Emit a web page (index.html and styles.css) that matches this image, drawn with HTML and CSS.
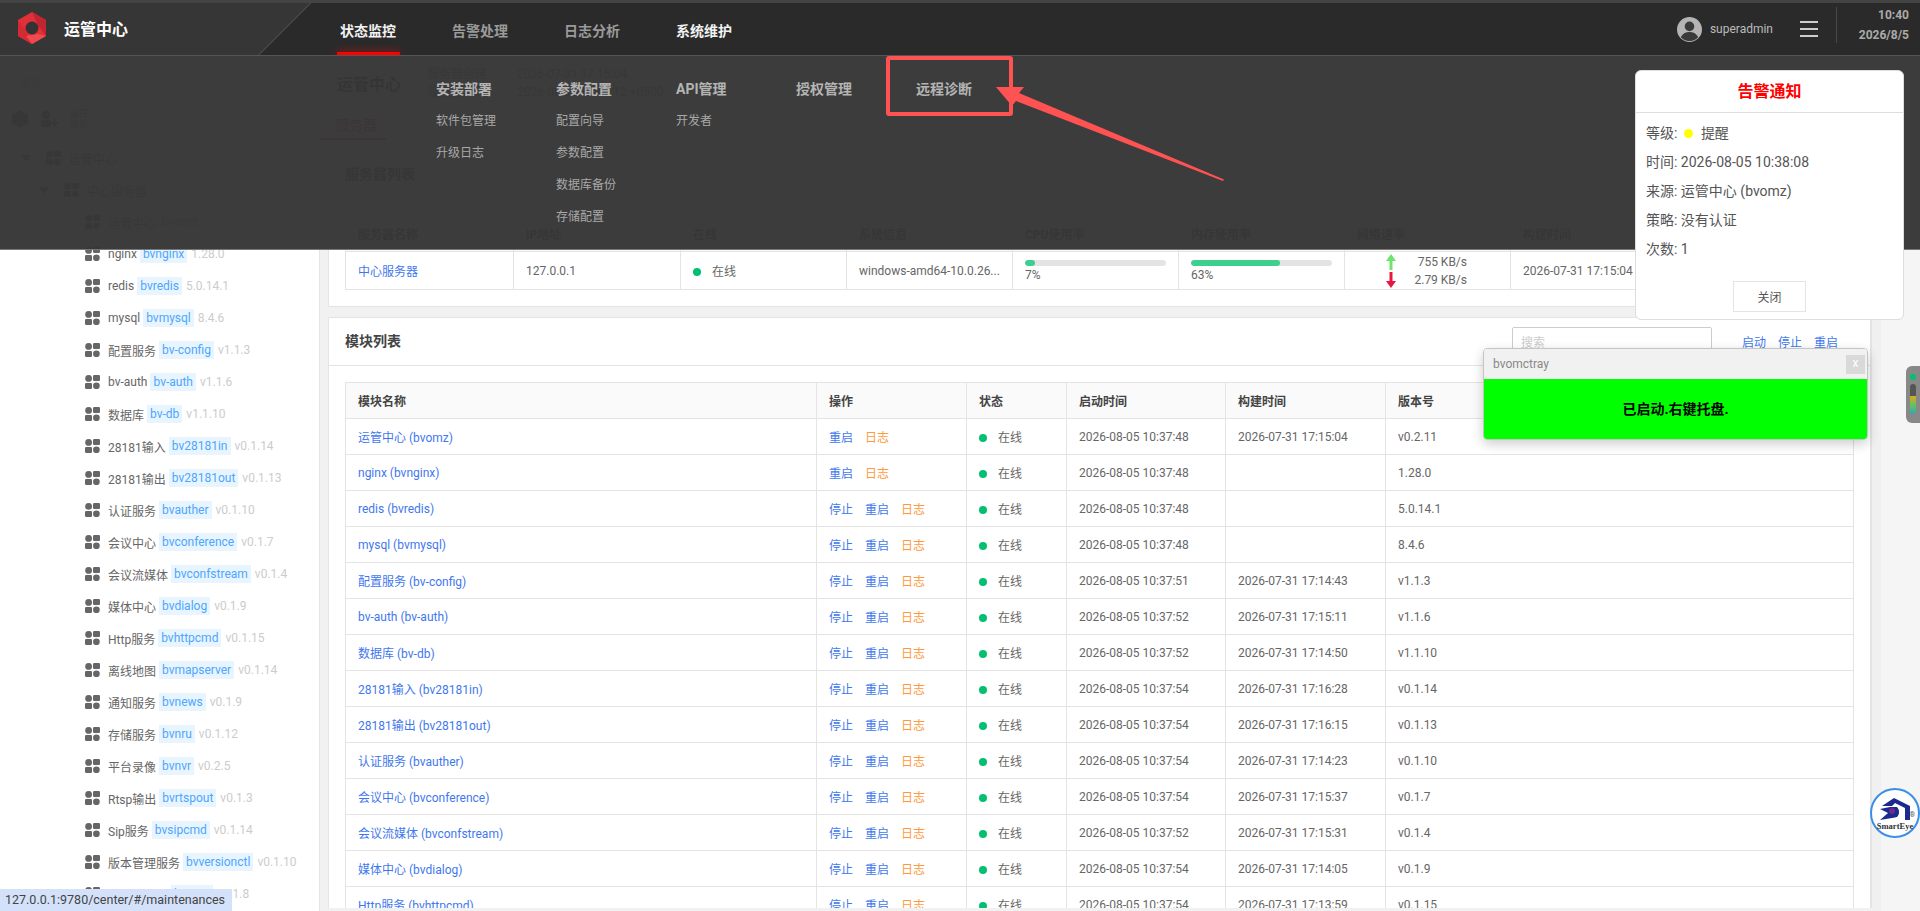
FILE: index.html
```html
<!DOCTYPE html>
<html lang="zh-CN">
<head>
    <meta charset="UTF-8">
    <title>运管中心</title>
    <link rel="stylesheet" href="styles.css">
</head>
<body>
    <svg width="0" height="0" class="defs">
        <defs>
            <symbol id="mod" viewBox="0 0 15 14">
                <circle cx="3.6" cy="3.4" r="3.4"/>
                <rect x="8" y="0" width="7" height="6" rx="1.2"/>
                <rect x="0" y="8" width="7" height="6" rx="1.2"/>
                <circle cx="11.4" cy="10.8" r="3.4"/>
            </symbol>
        </defs>
    </svg>

    <!-- 顶部导航 -->
    <header class="topbar">
        <div class="brand">
            <svg class="logo" viewBox="0 0 28 32">
                <polygon points="14,0 28,8 28,24 14,32 0,24 0,8" fill="#e2303a"/>
                <polygon points="14,0 28,8 28,24 20,13" fill="#c22430"/>
                <polygon points="0,8 8,19 14,32 0,24" fill="#d32a34"/>
                <polygon points="28,24 14,32 8,24 20,22" fill="#ef4a50"/>
                <circle cx="14" cy="16" r="6.500" fill="#333"/>
            </svg>
            <span class="brand-name">运管中心</span>
        </div>
        <div class="nav-edge">
            <div class="nav-area">
                <nav class="nav">
                    <a class="nav-item active">状态监控</a>
                    <a class="nav-item">告警处理</a>
                    <a class="nav-item">日志分析</a>
                    <a class="nav-item bright">系统维护</a>
                </nav>
                <div class="user">
                    <svg class="avatar" viewBox="0 0 24 24">
                        <circle cx="12" cy="12" r="12" fill="#b4b4b4"/>
                        <circle cx="12" cy="9" r="4.6" fill="#3a3a3a"/>
                        <path d="M3.6 19.5c1.6-3.6 4.6-5.2 8.4-5.2s6.800 1.600 8.400 5.200A11 11 0 0 1 12 23a11 11 0 0 1-8.400-3.500z" fill="#3a3a3a"/>
                    </svg>
                    <span class="user-name">superadmin</span>
                    <span class="burger"><i></i><i></i><i></i></span>
                    <div class="clock">
                        <b>10:40</b>
                        <b>2026/8/5</b>
                    </div>
                </div>
            </div>
        </div>
    </header>

    <div class="layout">
        <!-- 左侧模块树 -->
        <aside class="sidebar">
            <div class="side-search">搜索</div>
            <div class="side-tools">
                <svg width="16" height="18" viewBox="0 0 16 18"><polygon points="8,0 16,4.500 16,13.500 8,18 0,13.500 0,4.500" fill="#666"/></svg>
                <svg width="18" height="18" viewBox="0 0 18 18"><circle cx="6" cy="5" r="4" fill="#666"/><rect x="1" y="10" width="10" height="7" fill="#666"/><rect x="11" y="12" width="7" height="2" fill="#666"/><rect x="13.500" y="9.500" width="2" height="7" fill="#666"/></svg>
                <span class="tool-text">展开<br>收起</span>
            </div>
            <div class="tree-row level-0"><i class="caret"></i><svg class="tree-ico" viewBox="0 0 15 14"><use href="#mod"/></svg><span class="mod-name">运管中心</span></div>
            <div class="tree-row level-1"><i class="caret"></i><svg class="tree-ico" viewBox="0 0 15 14"><use href="#mod"/></svg><span class="mod-name">中心服务器</span></div>
            <div class="tree-row"><svg class="mod-ico"><use href="#mod"/></svg><span class="mod-name">运管中心</span><span class="tag">bvomz</span><span class="ver">v0.2.11</span></div>
            <div class="tree-row"><svg class="mod-ico"><use href="#mod"/></svg><span class="mod-name">nginx</span><span class="tag">bvnginx</span><span class="ver">1.28.0</span></div>
            <div class="tree-row"><svg class="mod-ico"><use href="#mod"/></svg><span class="mod-name">redis</span><span class="tag">bvredis</span><span class="ver">5.0.14.1</span></div>
            <div class="tree-row"><svg class="mod-ico"><use href="#mod"/></svg><span class="mod-name">mysql</span><span class="tag">bvmysql</span><span class="ver">8.4.6</span></div>
            <div class="tree-row"><svg class="mod-ico"><use href="#mod"/></svg><span class="mod-name">配置服务</span><span class="tag">bv-config</span><span class="ver">v1.1.3</span></div>
            <div class="tree-row"><svg class="mod-ico"><use href="#mod"/></svg><span class="mod-name">bv-auth</span><span class="tag">bv-auth</span><span class="ver">v1.1.6</span></div>
            <div class="tree-row"><svg class="mod-ico"><use href="#mod"/></svg><span class="mod-name">数据库</span><span class="tag">bv-db</span><span class="ver">v1.1.10</span></div>
            <div class="tree-row"><svg class="mod-ico"><use href="#mod"/></svg><span class="mod-name">28181输入</span><span class="tag">bv28181in</span><span class="ver">v0.1.14</span></div>
            <div class="tree-row"><svg class="mod-ico"><use href="#mod"/></svg><span class="mod-name">28181输出</span><span class="tag">bv28181out</span><span class="ver">v0.1.13</span></div>
            <div class="tree-row"><svg class="mod-ico"><use href="#mod"/></svg><span class="mod-name">认证服务</span><span class="tag">bvauther</span><span class="ver">v0.1.10</span></div>
            <div class="tree-row"><svg class="mod-ico"><use href="#mod"/></svg><span class="mod-name">会议中心</span><span class="tag">bvconference</span><span class="ver">v0.1.7</span></div>
            <div class="tree-row"><svg class="mod-ico"><use href="#mod"/></svg><span class="mod-name">会议流媒体</span><span class="tag">bvconfstream</span><span class="ver">v0.1.4</span></div>
            <div class="tree-row"><svg class="mod-ico"><use href="#mod"/></svg><span class="mod-name">媒体中心</span><span class="tag">bvdialog</span><span class="ver">v0.1.9</span></div>
            <div class="tree-row"><svg class="mod-ico"><use href="#mod"/></svg><span class="mod-name">Http服务</span><span class="tag">bvhttpcmd</span><span class="ver">v0.1.15</span></div>
            <div class="tree-row"><svg class="mod-ico"><use href="#mod"/></svg><span class="mod-name">离线地图</span><span class="tag">bvmapserver</span><span class="ver">v0.1.14</span></div>
            <div class="tree-row"><svg class="mod-ico"><use href="#mod"/></svg><span class="mod-name">通知服务</span><span class="tag">bvnews</span><span class="ver">v0.1.9</span></div>
            <div class="tree-row"><svg class="mod-ico"><use href="#mod"/></svg><span class="mod-name">存储服务</span><span class="tag">bvnru</span><span class="ver">v0.1.12</span></div>
            <div class="tree-row"><svg class="mod-ico"><use href="#mod"/></svg><span class="mod-name">平台录像</span><span class="tag">bvnvr</span><span class="ver">v0.2.5</span></div>
            <div class="tree-row"><svg class="mod-ico"><use href="#mod"/></svg><span class="mod-name">Rtsp输出</span><span class="tag">bvrtspout</span><span class="ver">v0.1.3</span></div>
            <div class="tree-row"><svg class="mod-ico"><use href="#mod"/></svg><span class="mod-name">Sip服务</span><span class="tag">bvsipcmd</span><span class="ver">v0.1.14</span></div>
            <div class="tree-row"><svg class="mod-ico"><use href="#mod"/></svg><span class="mod-name">版本管理服务</span><span class="tag">bvversionctl</span><span class="ver">v0.1.10</span></div>
            <div class="tree-row"><svg class="mod-ico"><use href="#mod"/></svg><span class="mod-name">流媒体服务</span><span class="tag">bvsmu</span><span class="ver">v0.1.8</span></div>
        </aside>

        <!-- 主内容 -->
        <main class="main">
            <div class="summary">
                <h2 class="summary-title">运管中心</h2>
                <div class="summary-meta">
                    <div><span>服务器创建</span>2026-07-31 17:15:04</div>
                    <div><span>服务器时间</span>2026-08-05 10:40:12 +0800</div>
                </div>
            </div>
            <div class="tabs"><span class="tab active">服务器</span></div>

            <section class="panel">
                <div class="panel-head"><h3>服务器列表</h3></div>
                <div class="panel-body">
                    <table class="grid server-grid">
                        <thead>
                            <tr><th>服务器名称</th><th>IP地址</th><th>在线</th><th>系统信息</th><th>CPU使用率</th><th>内存使用率</th><th>网络速率</th><th>构建时间</th><th>操作</th></tr>
                        </thead>
                        <tbody>
                            <tr>
                                <td><a class="link">中心服务器</a></td>
                                <td>127.0.0.1</td>
                                <td><i class="dot"></i>在线</td>
                                <td>windows-amd64-10.0.26...</td>
                                <td class="usage"><div class="track"><div class="fill" style="width: 7%"></div></div>7%</td>
                                <td class="usage"><div class="track"><div class="fill" style="width: 63%"></div></div>63%</td>
                                <td class="net">
                                    <div class="net-row"><svg width="10" height="16" viewBox="0 0 10 16"><polygon points="5,0 10,7 6.500,7 6.500,16 3.500,16 3.500,7 0,7" fill="#6ee36e"/></svg>755 KB/s</div>
                                    <div class="net-row"><svg width="10" height="16" viewBox="0 0 10 16"><polygon points="5,16 10,9 6.500,9 6.500,0 3.500,0 3.500,9 0,9" fill="#e8173f"/></svg>2.79 KB/s</div>
                                </td>
                                <td>2026-07-31 17:15:04</td>
                                <td></td>
                            </tr>
                        </tbody>
                    </table>
                </div>
            </section>

            <section class="panel">
                <div class="panel-head">
                    <h3>模块列表</h3>
                    <div class="panel-tools">
                        <div class="search-box">搜索</div>
                        <a class="link">启动</a>
                        <a class="link">停止</a>
                        <a class="link">重启</a>
                    </div>
                </div>
                <div class="panel-body">
                    <table class="grid module-grid">
                        <thead>
                            <tr><th class="c-name">模块名称</th><th class="c-op">操作</th><th class="c-state">状态</th><th class="c-start">启动时间</th><th class="c-build">构建时间</th><th>版本号</th></tr>
                        </thead>
                        <tbody>
                            <tr><td><a class="link">运管中心 (bvomz)</a></td><td class="ops"><a class="link">重启</a><a class="log">日志</a></td><td><i class="dot"></i>在线</td><td>2026-08-05 10:37:48</td><td>2026-07-31 17:15:04</td><td>v0.2.11</td></tr>
                            <tr><td><a class="link">nginx (bvnginx)</a></td><td class="ops"><a class="link">重启</a><a class="log">日志</a></td><td><i class="dot"></i>在线</td><td>2026-08-05 10:37:48</td><td></td><td>1.28.0</td></tr>
                            <tr><td><a class="link">redis (bvredis)</a></td><td class="ops"><a class="link">停止</a><a class="link">重启</a><a class="log">日志</a></td><td><i class="dot"></i>在线</td><td>2026-08-05 10:37:48</td><td></td><td>5.0.14.1</td></tr>
                            <tr><td><a class="link">mysql (bvmysql)</a></td><td class="ops"><a class="link">停止</a><a class="link">重启</a><a class="log">日志</a></td><td><i class="dot"></i>在线</td><td>2026-08-05 10:37:48</td><td></td><td>8.4.6</td></tr>
                            <tr><td><a class="link">配置服务 (bv-config)</a></td><td class="ops"><a class="link">停止</a><a class="link">重启</a><a class="log">日志</a></td><td><i class="dot"></i>在线</td><td>2026-08-05 10:37:51</td><td>2026-07-31 17:14:43</td><td>v1.1.3</td></tr>
                            <tr><td><a class="link">bv-auth (bv-auth)</a></td><td class="ops"><a class="link">停止</a><a class="link">重启</a><a class="log">日志</a></td><td><i class="dot"></i>在线</td><td>2026-08-05 10:37:52</td><td>2026-07-31 17:15:11</td><td>v1.1.6</td></tr>
                            <tr><td><a class="link">数据库 (bv-db)</a></td><td class="ops"><a class="link">停止</a><a class="link">重启</a><a class="log">日志</a></td><td><i class="dot"></i>在线</td><td>2026-08-05 10:37:52</td><td>2026-07-31 17:14:50</td><td>v1.1.10</td></tr>
                            <tr><td><a class="link">28181输入 (bv28181in)</a></td><td class="ops"><a class="link">停止</a><a class="link">重启</a><a class="log">日志</a></td><td><i class="dot"></i>在线</td><td>2026-08-05 10:37:54</td><td>2026-07-31 17:16:28</td><td>v0.1.14</td></tr>
                            <tr><td><a class="link">28181输出 (bv28181out)</a></td><td class="ops"><a class="link">停止</a><a class="link">重启</a><a class="log">日志</a></td><td><i class="dot"></i>在线</td><td>2026-08-05 10:37:54</td><td>2026-07-31 17:16:15</td><td>v0.1.13</td></tr>
                            <tr><td><a class="link">认证服务 (bvauther)</a></td><td class="ops"><a class="link">停止</a><a class="link">重启</a><a class="log">日志</a></td><td><i class="dot"></i>在线</td><td>2026-08-05 10:37:54</td><td>2026-07-31 17:14:23</td><td>v0.1.10</td></tr>
                            <tr><td><a class="link">会议中心 (bvconference)</a></td><td class="ops"><a class="link">停止</a><a class="link">重启</a><a class="log">日志</a></td><td><i class="dot"></i>在线</td><td>2026-08-05 10:37:54</td><td>2026-07-31 17:15:37</td><td>v0.1.7</td></tr>
                            <tr><td><a class="link">会议流媒体 (bvconfstream)</a></td><td class="ops"><a class="link">停止</a><a class="link">重启</a><a class="log">日志</a></td><td><i class="dot"></i>在线</td><td>2026-08-05 10:37:52</td><td>2026-07-31 17:15:31</td><td>v0.1.4</td></tr>
                            <tr><td><a class="link">媒体中心 (bvdialog)</a></td><td class="ops"><a class="link">停止</a><a class="link">重启</a><a class="log">日志</a></td><td><i class="dot"></i>在线</td><td>2026-08-05 10:37:54</td><td>2026-07-31 17:14:05</td><td>v0.1.9</td></tr>
                            <tr><td><a class="link">Http服务 (bvhttpcmd)</a></td><td class="ops"><a class="link">停止</a><a class="link">重启</a><a class="log">日志</a></td><td><i class="dot"></i>在线</td><td>2026-08-05 10:37:54</td><td>2026-07-31 17:13:59</td><td>v0.1.15</td></tr>
                        </tbody>
                    </table>
                </div>
            </section>
        </main>
        <div class="rail"></div>
    </div>

    <!-- 下拉菜单 -->
    <div class="mega-menu">
        <div class="menu-col"><h4>安装部署</h4><a>软件包管理</a><a>升级日志</a></div>
        <div class="menu-col"><h4>参数配置</h4><a>配置向导</a><a>参数配置</a><a>数据库备份</a><a>存储配置</a></div>
        <div class="menu-col"><h4>API管理</h4><a>开发者</a></div>
        <div class="menu-col"><h4>授权管理</h4></div>
        <div class="menu-col"><h4>远程诊断</h4></div>
    </div>

    <!-- 截图标注 -->
    <svg class="markup" viewBox="0 0 1920 911">
        <rect x="888" y="58" width="123" height="56" rx="1" fill="none" stroke="#ff5252" stroke-width="4"/>
        <polygon points="996,87 1024,87 1019,93 1224,179.500 1223,181 1016,101 1012,106" fill="#ff5252"/>
    </svg>

    <!-- 告警通知 -->
    <div class="alert-box">
        <div class="alert-title">告警通知</div>
        <div class="alert-body">
            <p>等级: <i class="dot-yellow"></i>提醒</p>
            <p>时间: 2026-08-05 10:38:08</p>
            <p>来源: 运管中心 (bvomz)</p>
            <p>策略: 没有认证</p>
            <p>次数: 1</p>
        </div>
        <div class="alert-foot"><button class="alert-close">关闭</button></div>
    </div>

    <!-- 托盘提示窗 -->
    <div class="tray-win">
        <div class="tray-head"><span>bvomctray</span><span class="tray-x">x</span></div>
        <div class="tray-body">已启动.右键托盘.</div>
    </div>

    <div class="side-widget">
        <i class="widget-dot"></i>
        <div class="widget-bar"></div>
    </div>

    <div class="smart-eye">
        <svg width="34" height="24" viewBox="0 0 34 24">
            <polygon points="16,0 32,8 32,22 27,22 27,10 17,5 14,8 4,8" fill="#1b2a8c"/>
            <polygon points="12,9 20,9 22,14 20,19 2,22 10,15 2,11" fill="#1b2a8c"/>
            <path d="M17 7a7.500 7.500 0 0 1 0 14" fill="none" stroke="#fff" stroke-width="1.500"/>
            <circle cx="14" cy="13" r="3" fill="#6b2a8c"/>
        </svg>
        <span>SmartEye</span>
        <i class="reg">®</i>
    </div>

    <div class="status-bar">127.0.0.1:9780/center/#/maintenances</div>
</body>
</html>
```

FILE: styles.css
```css
* {
    box-sizing: border-box;
}

html, body {
    margin: 0;
    height: 100%;
    overflow: hidden;
}

body {
    font-family: Roboto, "Noto Sans CJK SC", sans-serif;
    font-size: 12px;
    color: #666;
    background-color: #f1f1f1;
}

.defs {
    position: absolute;
}

h2, h3, h4, p {
    margin: 0;
}

/* 顶部导航 */
.topbar {
    display: flex;
    height: 56px;
    background-color: #363636;
    border-top: 3px solid #444;
    border-bottom: 1px solid #4c4c4c;
}

.brand {
    display: flex;
    align-items: center;
    width: 258px;
    padding-left: 18px;
}

.logo {
    width: 28px;
    height: 32px;
    margin-top: -2px;
}

.brand-name {
    margin-left: 18px;
    margin-top: -2px;
    font-size: 16px;
    font-weight: bold;
    color: #fff;
}

.nav-edge {
    flex: 1;
    background-color: #4c4c4c;
    clip-path: polygon(52px 0, 100% 0, 100% 100%, 0 100%);
}

.nav-area {
    display: flex;
    justify-content: space-between;
    height: 100%;
    padding-left: 54px;
    background-color: #2a2a2a;
    clip-path: polygon(53.500px 0, 100% 0, 100% 100%, 1.500px 100%);
}

.nav {
    display: flex;
}

.nav-item {
    position: relative;
    width: 112px;
    padding-top: 17px;
    text-align: center;
    font-size: 14px;
    font-weight: bold;
    color: #9a9a9a;
}

.nav-item.active,
.nav-item.bright {
    color: #f2f2f2;
}

.nav-item.active::after {
    content: "";
    position: absolute;
    left: 25px;
    right: 24px;
    bottom: 0;
    height: 3px;
    background-color: #f00;
    box-shadow: 0 -2px 6px rgba(255, 0, 0, 0.5);
}

.user {
    display: flex;
    align-items: center;
    padding-right: 15px;
}

.avatar {
    width: 25px;
    height: 25px;
}

.user-name {
    margin-left: 8px;
    color: #bbb;
}

.burger {
    display: flex;
    flex-direction: column;
    gap: 5px;
    width: 18px;
    margin-left: 27px;
}

.burger i {
    height: 2px;
    background-color: #ccc;
}

.clock {
    display: flex;
    flex-direction: column;
    gap: 4px;
    align-items: flex-end;
    width: 73px;
    height: 36px;
    margin-left: 18px;
    margin-right: -4px;
    margin-top: -8px;
    border-left: 1px solid #484848;
    color: #aaa;
    line-height: 16px;
}

/* 整体布局 */
.layout {
    display: flex;
    height: 855px;
}

.sidebar {
    width: 320px;
    flex-shrink: 0;
    padding-top: 9px;
    background-color: #fff;
    border-right: 1px solid #e4e4e4;
    overflow: hidden;
}

.side-search {
    height: 31px;
    margin: 0 9px 0 8px;
    padding: 7px 8px;
    border: 1px solid #ddd;
    color: #bbb;
}

.side-tools {
    display: flex;
    align-items: center;
    gap: 12px;
    height: 46px;
    padding-left: 12px;
}

.tool-text {
    font-size: 9px;
    line-height: 10px;
}

.tree-row {
    display: flex;
    align-items: center;
    height: 32px;
    padding-left: 85px;
    white-space: nowrap;
}

.level-0 {
    padding-left: 20px;
}

.level-1 {
    padding-left: 38px;
}

.caret {
    width: 0;
    height: 0;
    margin-right: 14px;
    border-left: 6px solid transparent;
    border-right: 6px solid transparent;
    border-top: 7px solid #777;
}

.tree-ico {
    width: 15px;
    height: 16px;
    margin-right: 8px;
    fill: #666;
}

.mod-ico {
    width: 15px;
    height: 14px;
    margin-right: 8px;
    fill: #666;
}

.mod-name {
    color: #666;
}

.tag {
    height: 18px;
    margin-left: 3px;
    padding: 0 3px;
    line-height: 18px;
    color: #4da6ff;
    background-color: #e8f5ff;
}

.ver {
    margin-left: 4px;
    color: #ccc;
}

.main {
    flex: 1;
    min-width: 0;
    padding-left: 8px;
    height: 852px;
    overflow: hidden;
    border-right: 1px solid #e4e4e4;
}

.rail {
    width: 48px;
    background: linear-gradient(to right, #f0f0f0 9px, #f5f5f5 9px);
}

.summary {
    display: flex;
    align-items: center;
    gap: 26px;
    height: 54px;
    padding-left: 9px;
}

.summary-title {
    font-size: 16px;
    color: #333;
}

.summary-meta {
    line-height: 18px;
}

.summary-meta span {
    display: inline-block;
    width: 90px;
}

.tabs {
    height: 30px;
    background-color: #fff;
    margin-left: -8px;
    border-bottom: 1px solid #e4e4e4;
}

.tab {
    display: inline-block;
    width: 66px;
    height: 30px;
    padding: 4px 0 0 15px;
    font-size: 14px;
    color: #c33;
    border-bottom: 2px solid #c33;
}

.panel {
    margin-top: 10px;
    background-color: #fff;
    border: 1px solid #e4e4e4;
}

.panel-head {
    display: flex;
    justify-content: space-between;
    height: 48px;
    padding-left: 16px;
    border-bottom: 1px solid #e4e4e4;
}

.panel-head h3 {
    font-size: 14px;
    line-height: 47px;
    color: #444;
}

.panel-tools {
    display: flex;
    gap: 12px;
    align-items: center;
    padding-right: 32px;
}

.search-box {
    width: 200px;
    height: 30px;
    margin-right: 18px;
    padding: 5px 8px;
    border: 1px solid #ccc;
    border-radius: 2px;
    color: #ccc;
}

.panel-body {
    padding: 16px;
}

.grid {
    width: 100%;
    border-collapse: collapse;
    table-layout: fixed;
    background-color: #fff;
}

.grid th,
.grid td {
    padding: 0 12px;
    border: 1px solid #e4e4e4;
    text-align: left;
    white-space: nowrap;
    overflow: hidden;
}

.grid th {
    height: 36px;
    background-color: #fafafa;
    font-weight: bold;
    color: #444;
}

.grid td {
    height: 36px;
}

.server-grid td {
    height: 38px;
}

.server-grid th:not(:last-child) {
    width: 166px;
}

.server-grid th:first-child {
    width: 168px;
}

.server-grid th:nth-child(2) {
    width: 167px;
}

.c-name { width: 471px; }
.c-op { width: 150px; }
.c-state { width: 100px; }
.c-start { width: 159px; }
.c-build { width: 160px; }

.link {
    color: #3f78ee;
}

.log {
    color: #ff9a3c;
}

.ops a {
    margin-right: 12px;
}

.dot {
    display: inline-block;
    width: 8px;
    height: 8px;
    margin-right: 11px;
    border-radius: 50%;
    background-color: #00c16e;
}

.usage {
    line-height: 14px;
}

.track {
    height: 6px;
    margin-bottom: 2px;
    border-radius: 3px;
    background-color: #e4e4e4;
    overflow: hidden;
}

.fill {
    height: 100%;
    border-radius: 3px;
    background-color: #3ccf8e;
}

.server-grid td.net {
    padding: 0;
}

.net-row {
    display: flex;
    justify-content: space-between;
    align-items: center;
    height: 18px;
    padding: 0 43px 0 41px;
}

/* 下拉菜单 */
.mega-menu {
    position: absolute;
    top: 55px;
    left: 0;
    right: 0;
    height: 195px;
    display: flex;
    padding: 17px 0 0 436px;
    background-color: rgba(54, 54, 54, 0.97);
    border-top: 1px solid #555;
    border-bottom: 1px solid #777;
}

.menu-col {
    width: 120px;
}

.menu-col h4 {
    height: 32px;
    font-size: 14px;
    line-height: 32px;
    color: #b4b4b4;
}

.menu-col a {
    display: block;
    height: 32px;
    line-height: 32px;
    color: #a8a8a8;
}

.markup {
    position: absolute;
    top: 0;
    left: 0;
    width: 1920px;
    height: 911px;
    pointer-events: none;
}

/* 告警通知 */
.alert-box {
    position: absolute;
    top: 70px;
    left: 1635px;
    width: 269px;
    height: 250px;
    background-color: #fff;
    border: 1px solid #ddd;
    border-radius: 6px;
}

.alert-title {
    height: 42px;
    border-bottom: 1px solid #ddd;
    text-align: center;
    font-size: 16px;
    font-weight: bold;
    line-height: 42px;
    color: #f00;
}

.alert-body {
    padding: 6px 10px 0;
    font-size: 14px;
    color: #555;
}

.alert-body p {
    height: 29px;
    line-height: 29px;
}

.dot-yellow {
    display: inline-block;
    width: 9px;
    height: 9px;
    margin: 0 8px 0 3px;
    border-radius: 50%;
    background-color: #ff0;
}

.alert-foot {
    margin-top: 17px;
    text-align: center;
}

.alert-close {
    width: 73px;
    height: 31px;
    border: 1px solid #e4e4e4;
    background-color: #fff;
    font-family: inherit;
    font-size: 12px;
    color: #555;
}

/* 托盘提示窗 */
.tray-win {
    position: absolute;
    top: 348px;
    left: 1483px;
    width: 385px;
    height: 92px;
    border: 1px solid #c4c4c4;
    border-radius: 4px;
    overflow: hidden;
    box-shadow: 0 4px 12px rgba(0, 0, 0, 0.2);
}

.tray-head {
    display: flex;
    justify-content: space-between;
    align-items: center;
    height: 30px;
    padding: 0 2px 0 9px;
    background-color: #f1f1f1;
    color: #888;
}

.tray-x {
    width: 19px;
    height: 19px;
    text-align: center;
    line-height: 17px;
    color: #fff;
    background-color: #d9d9d9;
}

.tray-body {
    height: 61px;
    text-align: center;
    font-size: 14px;
    font-weight: bold;
    line-height: 60px;
    color: #000;
    background-color: #0f0;
}

.side-widget {
    position: absolute;
    top: 366px;
    right: 0;
    width: 14px;
    height: 57px;
    padding: 8px 0 0 4px;
    border-radius: 6px 0 0 6px;
    background-color: #888;
}

.widget-dot {
    display: block;
    width: 6px;
    height: 6px;
    border-radius: 50%;
    background-color: #00c16e;
}

.widget-bar {
    width: 6px;
    height: 30px;
    margin-top: 4px;
    border-radius: 3px;
    background: linear-gradient(#555 0, #555 40%, #d8ac1c 40%, #5cc06a 75%, #2aa8b8 100%);
}

.smart-eye {
    position: absolute;
    top: 788px;
    left: 1870px;
    width: 50px;
    height: 50px;
    padding-top: 8px;
    display: flex;
    flex-direction: column;
    align-items: center;
    border: 2px solid #3b8eea;
    border-radius: 50%;
    background-color: #fff;
}

.smart-eye span {
    font-family: "Liberation Serif", serif;
    font-size: 8.500px;
    font-weight: bold;
    line-height: 9px;
    color: #333;
}

.reg {
    position: absolute;
    right: 3px;
    top: 22px;
    font-size: 7px;
    font-style: normal;
    line-height: 7px;
    color: #555;
}

.status-bar {
    position: absolute;
    left: 0;
    bottom: 0;
    height: 22px;
    padding: 0 7px 0 5px;
    font-size: 12.500px;
    line-height: 22px;
    color: #444;
    background-color: #d3e2fa;
}
```
